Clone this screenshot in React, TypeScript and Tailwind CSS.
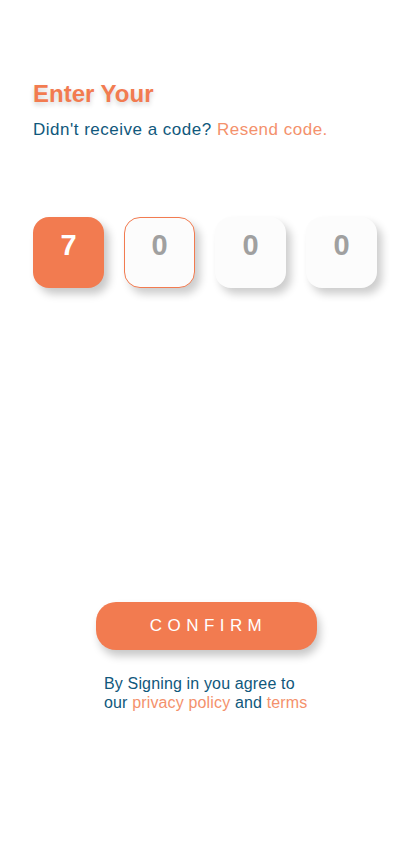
import { useState } from 'react';

const digits = ['7', '0', '0', '0'];

export default function App() {
  const [active] = useState(0);

  return (
    <div className="flex min-h-[847px] w-[412px] flex-col bg-white font-['Liberation_Sans',Arial,sans-serif]">
      <div className="px-[33px] pt-[80px]">
        <h1 className="text-[24px] font-bold leading-[28px] text-[#f27b50] [text-shadow:0_3px_5px_rgba(0,0,0,0.18)]">
          Enter Your
        </h1>
        <p className="mt-[12px] text-[17px] leading-[20px] tracking-[0.5px] text-[#10587c]">
          Didn&apos;t receive a code? <span className="text-[#f4916c]">Resend code.</span>
        </p>
      </div>

      <div className="mt-[77px] flex gap-[20px] px-[33px]">
        {digits.map((d, i) => (
          <div
            key={i}
            className={
              i === active
                ? 'flex h-[71px] w-[71px] items-center justify-center rounded-[16px] bg-[#f27b50] shadow-[5px_6px_8px_rgba(0,0,0,0.22)]'
                : i === 1
                  ? 'flex h-[71px] w-[71px] items-center justify-center rounded-[16px] border border-[#f27b50] bg-[#fcfcfc] shadow-[5px_6px_8px_rgba(0,0,0,0.2)]'
                  : 'flex h-[71px] w-[71px] items-center justify-center rounded-[16px] bg-[#fcfcfc] shadow-[5px_6px_8px_rgba(0,0,0,0.2)]'
            }
          >
            <span
              className={
                i === active
                  ? 'mb-[14px] text-[29px] font-bold text-white'
                  : 'mb-[14px] text-[29px] font-bold text-[#a0a0a0]'
              }
            >
              {d}
            </span>
          </div>
        ))}
      </div>

      <div className="mt-[314px] flex flex-col items-center">
        <button
          type="button"
          className="h-[48px] w-[221px] rounded-[20px] bg-[#f27b50] pl-[5px] text-[17px] font-light tracking-[0.32em] text-white shadow-[3px_6px_8px_rgba(0,0,0,0.22)]"
        >
          CONFIRM
        </button>
        <div className="mt-[24px] w-[204px] text-[16px] leading-[19px] tracking-[0.15px] text-[#10587c]">
          <p>By Signing in you agree to</p>
          <p>
            our <span className="text-[#f4916c]">privacy policy</span> and <span className="text-[#f4916c]">terms</span>
          </p>
        </div>
      </div>
    </div>
  );
}
